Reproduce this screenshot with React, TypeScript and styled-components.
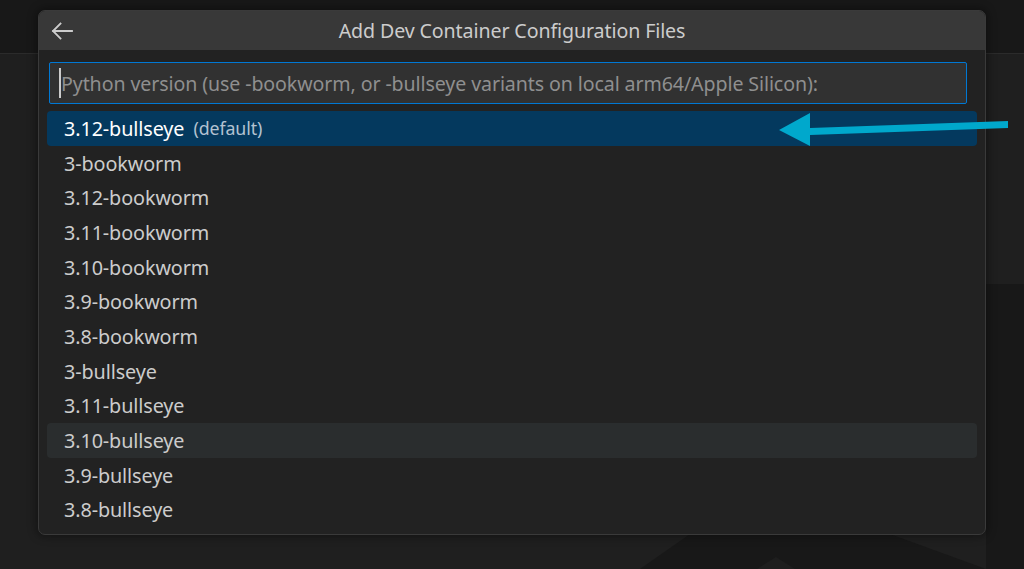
import React from "react";
import styled, { createGlobalStyle } from "styled-components";

const GlobalStyle = createGlobalStyle`
  html, body { margin: 0; padding: 0; background: #1f1f1f; }
  * { box-sizing: border-box; }
`;

const Page = styled.div`
  position: relative;
  width: 1024px;
  height: 569px;
  overflow: hidden;
  background: #1f1f1f;
  font-family: "Noto Sans", "Open Sans", sans-serif;
  display: flex;
  flex-direction: column;
`;

const TopBar = styled.div`
  height: 54px;
  flex: none;
  background: #181818;
  border-bottom: 1px solid #2b2b2b;
`;

const Workbench = styled.div`
  flex: 1;
  display: flex;
`;

const Editor = styled.div`
  flex: 1;
  position: relative;
  background: #1f1f1f;
`;

const SideStrip = styled.div`
  width: 38px;
  flex: none;
  display: flex;
  flex-direction: column;
`;

const StripTop = styled.div`
  height: 230px;
  background: #1f1f1f;
`;

const StripBottom = styled.div`
  flex: 1;
  background: #181818;
`;

const Watermark = styled.svg`
  position: absolute;
  left: 0;
  top: 0;
`;

const Dialog = styled.div`
  position: absolute;
  left: 38px;
  top: 10px;
  width: 948px;
  height: 525px;
  background: #222222;
  border: 1px solid #3a3a3a;
  border-radius: 7px;
  box-shadow: 0 0 8px 2px rgba(0, 0, 0, 0.36);
  overflow: hidden;
  display: flex;
  flex-direction: column;
`;

const TitleBar = styled.div`
  height: 39px;
  flex: none;
  background: #383838;
  display: grid;
  grid-template-columns: 60px 1fr 60px;
  align-items: center;
`;

const BackButton = styled.div`
  display: flex;
  align-items: center;
  padding-left: 11px;
  color: #cccccc;
`;

const Title = styled.div`
  text-align: center;
  color: #cccccc;
  font-size: 19.6px;
  letter-spacing: -0.1px;
`;

const InputRow = styled.div`
  padding: 12px 18px 7px 10px;
`;

const InputBox = styled.div`
  height: 42px;
  background: #313131;
  border: 1px solid #0078d4;
  border-radius: 2px;
  display: flex;
  align-items: center;
  padding-left: 9px;
  gap: 0px;
  overflow: hidden;
  white-space: nowrap;
`;

const Caret = styled.div`
  width: 2px;
  height: 30px;
  flex: none;
  background: #cccccc;
`;

const Placeholder = styled.span`
  color: #8f8f8f;
  font-size: 19.6px;
  letter-spacing: -0.1px;
`;

const List = styled.div`
  padding: 0 8px 0 8px;
  display: flex;
  flex-direction: column;
`;

const Row = styled.div<{ $state?: "selected" | "hover" }>`
  height: 34.7px;
  display: flex;
  align-items: center;
  gap: 9px;
  padding-left: 17px;
  border-radius: 4px;
  font-size: 19.8px;
  letter-spacing: -0.1px;
  color: ${(p) => (p.$state === "selected" ? "#ffffff" : "#cccccc")};
  background: ${(p) =>
    p.$state === "selected" ? "#04395e" : p.$state === "hover" ? "#2a2d2e" : "transparent"};
`;

const Description = styled.span`
  color: #b3c2d1;
  font-size: 17.8px;
`;

const Pointer = styled.svg`
  position: absolute;
  left: 770px;
  top: 108px;
`;

const items = [
  "3.12-bullseye",
  "3-bookworm",
  "3.12-bookworm",
  "3.11-bookworm",
  "3.10-bookworm",
  "3.9-bookworm",
  "3.8-bookworm",
  "3-bullseye",
  "3.11-bullseye",
  "3.10-bullseye",
  "3.9-bullseye",
  "3.8-bullseye",
];

export default function App() {
  return (
    <>
      <GlobalStyle />
      <Page>
        <TopBar />
        <Workbench>
          <Editor>
            <Watermark width="986" height="515" viewBox="0 0 986 515">
              <polygon points="690,480 890,480 986,515 640,515" fill="#181818" />
              <polygon points="776,503 795,515 757,515" fill="#1e1e1e" />
            </Watermark>
          </Editor>
          <SideStrip>
            <StripTop />
            <StripBottom />
          </SideStrip>
        </Workbench>
        <Dialog>
          <TitleBar>
            <BackButton>
              <svg width="24" height="20" viewBox="0 0 24 20" fill="none">
                <path
                  d="M22 10H3M10.5 2.5L3 10l7.5 7.5"
                  stroke="#cccccc"
                  strokeWidth="1.8"
                  strokeLinecap="square"
                />
              </svg>
            </BackButton>
            <Title>Add Dev Container Configuration Files</Title>
            <div />
          </TitleBar>
          <InputRow>
            <InputBox>
              <Caret />
              <Placeholder>
                Python version (use -bookworm, or -bullseye variants on local arm64/Apple Silicon):
              </Placeholder>
            </InputBox>
          </InputRow>
          <List>
            {items.map((it, i) => (
              <Row key={it} $state={i === 0 ? "selected" : i === 9 ? "hover" : undefined}>
                <span>{it}</span>
                {i === 0 && <Description>(default)</Description>}
              </Row>
            ))}
          </List>
        </Dialog>
        <Pointer width="254" height="44" viewBox="0 0 254 44">
          <polygon points="9,22 40,5 40,20 238,13 238,20 40,27 40,38" fill="#00a8cc" />
        </Pointer>
      </Page>
    </>
  );
}
